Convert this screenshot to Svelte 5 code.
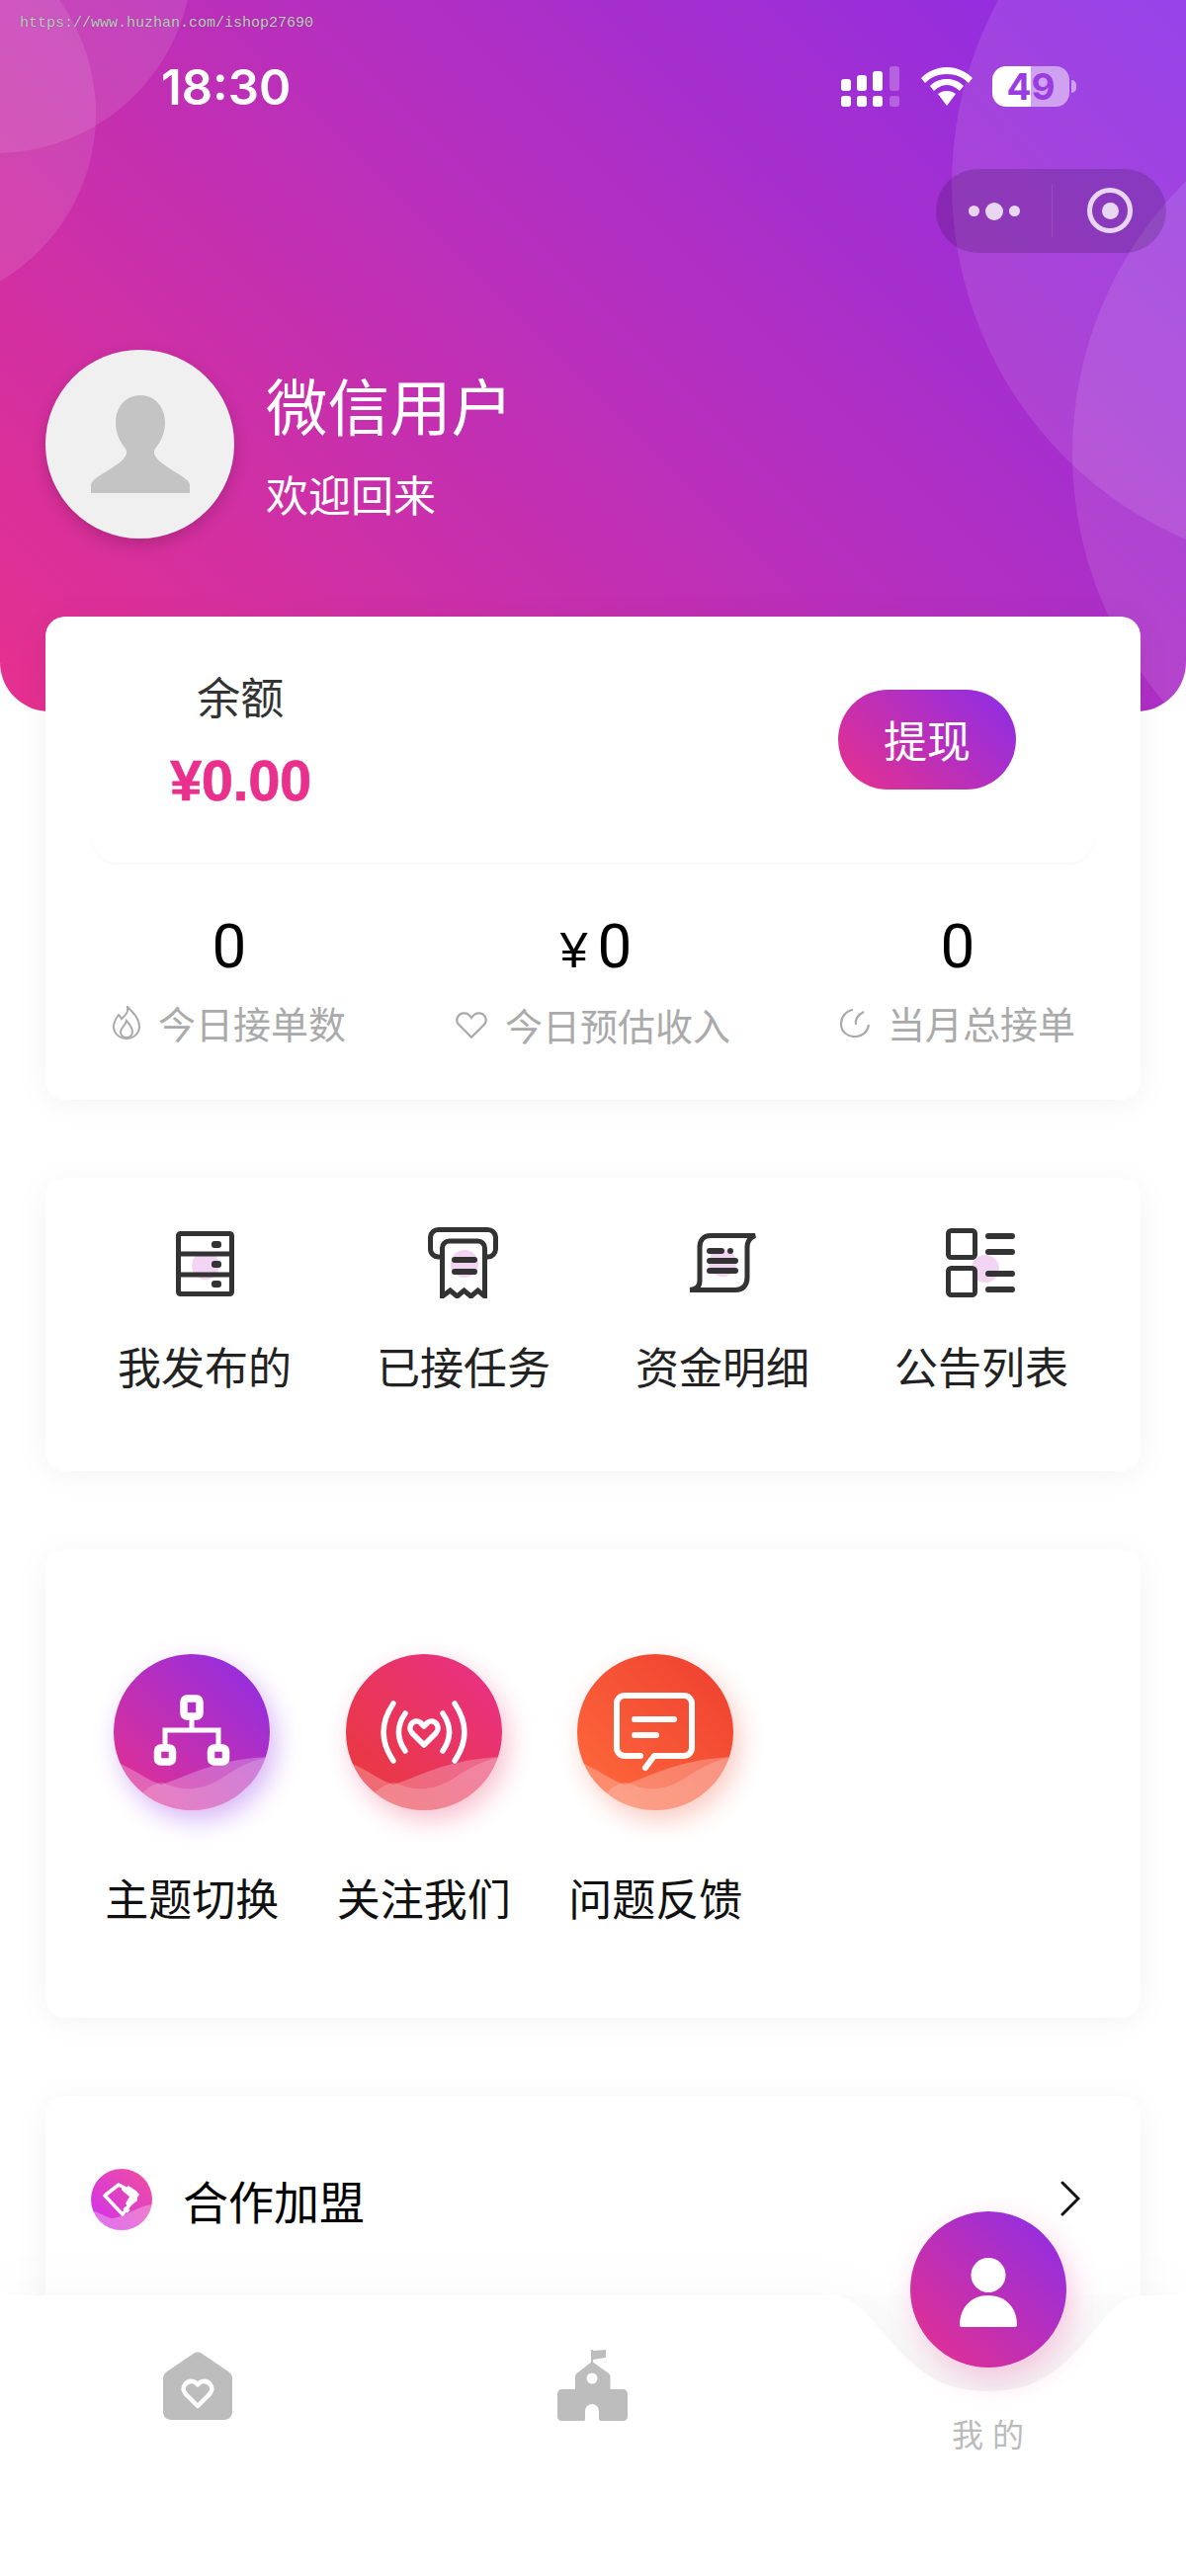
<script>
  const menuItems = [
    { label: '我发布的', icon: 'drawer' },
    { label: '已接任务', icon: 'receipt' },
    { label: '资金明细', icon: 'scroll' },
    { label: '公告列表', icon: 'list' }
  ];

  const tools = [
    { label: '主题切换', tone: 'violet', icon: 'tree' },
    { label: '关注我们', tone: 'rose', icon: 'signal' },
    { label: '问题反馈', tone: 'orange', icon: 'chat' }
  ];
</script>

<div class="page">
  <header class="hero">
    <span class="bubble b1"></span>
    <span class="bubble b2"></span>
    <span class="bubble b3"></span>
    <span class="bubble b4"></span>

    <div class="watermark">https://www.huzhan.com/ishop27690</div>

    <div class="status">
      <span class="time">18:30</span>
      <div class="status-icons">
        <svg width="60" height="42" viewBox="0 0 60 42" fill="#fff">
          <rect x="0" y="13" width="10" height="12" rx="3" />
          <rect x="16" y="9" width="10" height="16" rx="3" />
          <rect x="32" y="5" width="10" height="20" rx="3" />
          <rect x="49" y="0" width="10" height="25" rx="3" opacity=".25" />
          <rect x="0" y="30" width="10" height="11" rx="3" />
          <rect x="16" y="30" width="10" height="11" rx="3" />
          <rect x="32" y="30" width="10" height="11" rx="3" />
          <rect x="49" y="30" width="10" height="11" rx="3" opacity=".25" />
        </svg>
        <svg class="wifi" width="52" height="40" viewBox="0 0 52 40" fill="#fff">
          <path d="M26 0C16 0 7 4 0 11l4 5c6-6 13-9 22-9s16 3 22 9l4-5C45 4 36 0 26 0z" />
          <path d="M26 12c-7 0-12 2-17 7l4 5c3-3 8-6 13-6s10 3 13 6l4-5c-5-5-10-7-17-7z" />
          <path d="M26 24c-4 0-6 1-9 3l9 12 9-12c-3-2-5-3-9-3z" />
        </svg>
        <div class="battery"><span>49</span></div>
        <i class="nub"></i>
      </div>
    </div>

    <div class="capsule">
      <div class="dots"><i></i><i class="big"></i><i></i></div>
      <div class="target"><i></i></div>
    </div>

    <div class="profile">
      <div class="avatar">
        <svg width="100" height="100" viewBox="0 0 100 100" fill="#c4c4c4">
          <path d="M50 0c-14 0-25 11-25 28 0 11 5 20 10 26 2 3 1 6-1 9-6 8-20 14-30 22-3 2-4 4-4 7v7h100v-7c0-3-1-5-4-7-10-8-24-14-30-22-2-3-3-6-1-9 5-6 10-15 10-26C75 11 64 0 50 0z" />
        </svg>
      </div>
      <div class="who">
        <div class="name">微信用户</div>
        <div class="hello">欢迎回来</div>
      </div>
    </div>
  </header>

  <main class="content">
    <section class="card balance-card">
      <div class="balance">
        <div class="balance-text">
          <div class="balance-label">余额</div>
          <div class="balance-value">¥0.00</div>
        </div>
        <div class="withdraw">提现</div>
      </div>
      <div class="stats">
        <div class="stat">
          <div class="stat-num">0</div>
          <div class="stat-label">
            <svg width="28" height="34" viewBox="0 0 28 34" fill="none" stroke="#aaa" stroke-width="2">
              <path d="M15 1c1 6-2 8-6 12-1-2-2-3-3-4-3 4-5 8-5 12 0 7 6 12 13 12s13-5 13-12c0-8-6-14-12-20z" />
              <path d="M14 32c-4 0-6-3-6-6 0-4 5-6 6-11 3 4 6 7 6 11 0 3-2 6-6 6z" />
            </svg>
            今日接单数
          </div>
        </div>
        <div class="stat">
          <div class="stat-num"><small>¥</small>0</div>
          <div class="stat-label low">
            <svg width="32" height="29" viewBox="0 0 34 30" fill="none" stroke="#aaa" stroke-width="2.4">
              <path d="M17 28 3 14C-1 9 3 2 9 2c3 0 6 2 8 5 2-3 5-5 8-5 6 0 10 7 6 12z" />
            </svg>
            今日预估收入
          </div>
        </div>
        <div class="stat">
          <div class="stat-num">0</div>
          <div class="stat-label">
            <svg width="30" height="30" viewBox="0 0 30 30" fill="none" stroke="#aaa" stroke-width="2.2">
              <path d="M13 2C6 3 1 9 1 16c0 8 6 13 14 13s13-5 14-12" />
              <path d="M16 17c-1-5 2-10 8-13" />
            </svg>
            当月总接单
          </div>
        </div>
      </div>
    </section>

    <section class="card menu-card">
      {#each menuItems as item}
        <div class="menu-item">
          <div class="menu-icon">
            <span class="blot {item.icon}"></span>
            {#if item.icon === 'drawer'}
              <svg width="72" height="72" viewBox="0 0 72 72" fill="none" stroke="#333" stroke-width="5">
                <rect x="9.500" y="6.500" width="54" height="61" rx="2" />
                <path d="M8 27h57M8 48h57" />
                <g fill="#333" stroke="none">
                  <rect x="43" y="14" width="10" height="7" rx="3" />
                  <rect x="43" y="34" width="10" height="7" rx="3" />
                  <rect x="43" y="54" width="10" height="7" rx="3" />
                </g>
              </svg>
            {:else if item.icon === 'receipt'}
              <svg width="72" height="72" viewBox="0 0 72 72" fill="none" stroke="#333" stroke-width="5">
                <path d="M12 30H11a8 8 0 0 1-8.500-8V10a8 8 0 0 1 8-7.500h50a8 8 0 0 1 8 7.500v12a8 8 0 0 1-8 8H60" />
                <path d="M14.500 70V21a7 7 0 0 1 7-7h29a7 7 0 0 1 7 7v49l-7-6-7 6-7-6-7 6-7-6-8 6z" stroke-linejoin="miter" />
                <path d="M27 33h20M27 45h20" stroke-linecap="round" stroke-width="6" />
              </svg>
            {:else if item.icon === 'scroll'}
              <svg width="72" height="72" viewBox="0 0 72 72" fill="none" stroke="#333" stroke-width="5" stroke-linecap="round">
                <path d="M69 8.500H24C16 8.500 13 14 13 20V54c0 6-3 9-10 9.500H49c8 0 12-5 12-13V20C61 15 63 11 69 8.500z" />
                <path d="M23 24h12M23 34h26M23 44h26" stroke-width="6" />
                <circle cx="44" cy="24" r="3" fill="#333" stroke="none" />
              </svg>
            {:else}
              <svg width="72" height="72" viewBox="0 0 72 72" fill="none" stroke="#333" stroke-width="5">
                <rect x="2.500" y="3.500" width="27" height="27" rx="3" />
                <rect x="2.500" y="41.500" width="27" height="27" rx="3" />
                <path d="M43 9h24M43 25h24M43 47h24M43 63h24" stroke-width="6" stroke-linecap="round" />
              </svg>
            {/if}
          </div>
          <div class="menu-label">{item.label}</div>
        </div>
      {/each}
    </section>

    <section class="card tools-card">
      {#each tools as tool}
        <div class="tool">
          <div class="tool-icon {tool.tone}">
            {#if tool.icon === 'tree'}
              <svg width="80" height="80" viewBox="0 0 80 80" fill="none" stroke="#fff" stroke-width="7.500">
                <rect x="32" y="6" width="16" height="18" rx="3" />
                <path d="M40 27v11H13v15M40 38h27v15" stroke-width="5" />
                <rect x="5.500" y="56" width="15" height="14" rx="3" />
                <rect x="59.500" y="56" width="15" height="14" rx="3" />
              </svg>
            {:else if tool.icon === 'signal'}
              <svg width="90" height="80" viewBox="0 0 90 80" fill="none" stroke="#fff" stroke-width="5.500" stroke-linecap="round">
                <path d="M14 11C1 30 1 50 14 69M76 11c13 19 13 39 0 58" />
                <path d="M26 21c-9 13-9 25 0 38M64 21c9 13 9 25 0 38" />
                <path d="M45 53 33 41c-6-7 2-15 8-11l4 4 4-4c6-4 14 4 8 11z" stroke-linejoin="round" />
              </svg>
            {:else}
              <svg width="84" height="84" viewBox="0 0 84 84" fill="none" stroke="#fff" stroke-width="6" stroke-linecap="round">
                <path d="M27 66H11a8 8 0 0 1-8-8V13a8 8 0 0 1 8-8h60a8 8 0 0 1 8 8v45a8 8 0 0 1-8 8H41l-9 12" stroke-linejoin="round" />
                <path d="M21 29h40M21 45h22" />
              </svg>
            {/if}
            <svg class="waves" width="158" height="158" viewBox="0 0 158 158">
              <path d="M0 108c20 8 35 20 48 24 22-6 52-26 110-28v54H0z" fill="rgba(255,255,255,.26)" />
              <path d="M20 158V150c10-12 20-20 30-20 20 10 40 8 60-5 15-10 30-18 48-21v54z" fill="rgba(255,255,255,.18)" />
            </svg>
          </div>
          <div class="tool-label">{tool.label}</div>
        </div>
      {/each}
    </section>

    <section class="card join-card">
      <div class="join-row">
        <div class="join-icon">
          <svg class="join-wave" width="62" height="62" viewBox="0 0 62 62">
            <path d="M0 42c10 2 16 8 22 8 14-2 24-12 40-14v26H0z" fill="rgba(255,255,255,.3)" />
            <path d="M14 27 28 16 47 26 32 46z" fill="none" stroke="#fff" stroke-width="3.500" stroke-linejoin="round" />
            <path d="M31 17l5 2 2-2 9 6v9l-9 7-3-4 4-7-5-4-3-3z" fill="#fff" />
            <path d="M33 41l4-3M36 44l3-3" stroke="#fff" stroke-width="2" />
          </svg>
        </div>
        <div class="join-label">合作加盟</div>
        <svg class="chevron" width="20" height="36" viewBox="0 0 20 36" fill="none" stroke="#111" stroke-width="3" stroke-linecap="round">
          <path d="M2 2l16 16L2 34" />
        </svg>
      </div>
    </section>
  </main>

  <nav class="tabbar">
    <svg class="tab-bg" width="1200" height="284" viewBox="0 0 1200 284">
      <defs>
        <linearGradient id="notch" x1="0" y1="0" x2="0" y2="1">
          <stop offset="0" stop-color="#fdfdfd" />
          <stop offset="1" stop-color="#f7f7f7" />
        </linearGradient>
      </defs>
      <path d="M846 0c26 4 44 38 74 66 24 22 46 31 80 31s56-9 80-31c28-26 44-62 74-66z" fill="url(#notch)" />
      <path class="tab-white" d="M0 0H846c26 4 44 38 74 66 24 22 46 31 80 31s56-9 80-31c28-26 44-62 74-66h46v284H0z" fill="#fff" />
    </svg>
    <div class="tab">
      <svg width="70" height="70" viewBox="0 0 70 70">
        <path d="M35 .500c-1.500 0-3 .5-4 1.200L4 20c-2.500 1.700-4 4-4 7v34c0 4.400 3.600 8 8 8h54c4.400 0 8-3.600 8-8V27c0-3-1.500-5.300-4-7L39 1.700C38 1 36.500.5 35 .500z" fill="#bdbdbd" />
        <path d="M35 55 23 43c-6-7 1-14 7-13 2 .3 3.500 1.500 5 3.500 1.500-2 3-3.200 5-3.500 6-1 13 6 7 13z" fill="none" stroke="#fff" stroke-width="4.500" stroke-linejoin="round" />
      </svg>
    </div>
    <div class="tab castle">
      <svg width="72" height="72" viewBox="0 0 72 72" fill="#bdbdbd">
        <rect x="34" y="0" width="2" height="13" />
        <path d="M36 1 49 0v8l-13 2z" />
        <path d="M35 12l17 12c1 1 1.500 2 1.500 3v13H66c3 0 5 2 5 5v23c0 2-2 4-4 4H44c-1.500 0-2-1-2-2v-8a7 7 0 0 0-14 0v8c0 1-.5 2-2 2H4c-2 0-4-2-4-4V45c0-3 2-5 5-5h13V27c0-1 .5-2 1.500-3z" />
        <circle cx="35" cy="29" r="5.500" fill="#fff" />
      </svg>
    </div>
    <div class="tab active">
      <div class="me-label">我 的</div>
    </div>
    <div class="fab">
      <svg width="60" height="70" viewBox="0 0 60 70" fill="#fff">
        <circle cx="30" cy="17.500" r="17.500" />
        <path d="M1 68c0-17 11-30 29-30s29 13 29 30c0 1-1 2-2 2H3c-1 0-2-1-2-2z" />
      </svg>
    </div>
  </nav>
</div>

<style>
  :global(body) {
    margin: 0;
    background: #fff;
  }

  .page {
    position: relative;
    width: 1200px;
    height: 2607px;
    overflow: hidden;
    background: #fff;
    font-family: "Noto Sans CJK SC", "Noto Sans", sans-serif;
  }

  .hero {
    position: relative;
    height: 720px;
    box-sizing: border-box;
    overflow: hidden;
    border-radius: 0 0 50px 50px;
    background: linear-gradient(45deg, #e6308e, #8b2ee8);
  }

  .bubble {
    position: absolute;
    border-radius: 50%;
    background: rgba(255, 255, 255, 0.1);
  }
  .b1 { left: -205px; top: -245px; width: 400px; height: 400px; }
  .b2 { left: -297px; top: -82px; width: 394px; height: 394px; }
  .b3 { left: 963px; top: -206px; width: 784px; height: 784px; }
  .b4 { left: 1085px; top: 71px; width: 776px; height: 776px; }

  .watermark {
    position: absolute;
    left: 20px;
    top: 15px;
    font: 15px/18px "Liberation Mono", monospace;
    color: #c9c9c9;
    text-shadow: 0 0 1px rgba(60, 60, 60, 0.7);
  }

  .status {
    position: relative;
    display: flex;
    justify-content: space-between;
    padding: 60px 111px 0 163px;
    height: 50px;
  }

  .time {
    font: 600 49px/58px Inter, sans-serif;
    color: #fff;
  }

  .status-icons {
    display: flex;
    align-items: flex-start;
    padding-top: 7px;
  }

  .wifi {
    margin-left: 21px;
    margin-top: 1px;
  }

  .battery {
    position: relative;
    width: 78px;
    height: 41px;
    margin-left: 20px;
    border-radius: 14px;
    background: linear-gradient(90deg, #fff 50%, rgba(255, 255, 255, 0.5) 50%);
    text-align: center;
    font: 700 37px/41px Inter, sans-serif;
    color: #9a3ce0;
  }

  .nub {
    width: 5px;
    height: 13px;
    margin: 14px 0 0 2px;
    border-radius: 0 6px 6px 0;
    background: rgba(255, 255, 255, 0.5);
  }

  .capsule {
    position: absolute;
    left: 947px;
    top: 171px;
    display: flex;
    width: 233px;
    height: 85px;
    border-radius: 43px;
    background: rgba(0, 0, 0, 0.15);
  }

  .dots {
    display: flex;
    align-items: center;
    justify-content: center;
    gap: 6px;
    width: 117px;
    margin: 16px 0;
    border-right: 1px solid rgba(255, 255, 255, 0.1);
  }
  .dots i {
    width: 11px;
    height: 11px;
    border-radius: 50%;
    background: rgba(255, 255, 255, 0.8);
  }
  .dots i.big {
    width: 18px;
    height: 18px;
  }

  .target {
    display: flex;
    align-items: center;
    justify-content: center;
    width: 46px;
    height: 46px;
    box-sizing: border-box;
    margin: 19px 0 0 35px;
    border: 5px solid rgba(255, 255, 255, 0.8);
    border-radius: 50%;
  }
  .target i {
    width: 17px;
    height: 17px;
    border-radius: 50%;
    background: rgba(255, 255, 255, 0.8);
  }

  .profile {
    position: absolute;
    left: 46px;
    top: 354px;
    display: flex;
    align-items: center;
    gap: 32px;
  }

  .avatar {
    display: flex;
    align-items: center;
    justify-content: center;
    width: 191px;
    height: 191px;
    border-radius: 50%;
    background: #f0f0f0;
    box-shadow: 0 6px 16px rgba(0, 0, 0, 0.18);
  }

  .who {
    margin-top: -4px;
  }

  .name {
    font-size: 62.500px;
    line-height: 84px;
    color: #fff;
  }

  .hello {
    margin-top: 18px;
    font-size: 43px;
    line-height: 60px;
    color: #fff;
  }

  .content {
    position: relative;
    display: flex;
    flex-direction: column;
    gap: 79px;
    margin-top: -96px;
    padding: 0 46px;
  }

  .card {
    border-radius: 20px;
    background: #fff;
    box-shadow: 0 4px 36px rgba(0, 0, 0, 0.05);
  }

  .balance-card {
    height: 489px;
    box-sizing: border-box;
    padding: 46px 48px 0;
  }

  .balance {
    display: flex;
    align-items: center;
    justify-content: space-between;
    height: 203px;
    box-sizing: border-box;
    padding: 0 78px 46px 78px;
    border-radius: 24px;
    box-shadow: 0 2px 3px rgba(0, 0, 0, 0.03);
  }

  .balance-text {
    text-align: center;
  }

  .balance-label {
    font-size: 44px;
    line-height: 60px;
    color: #333;
  }

  .balance-value {
    margin-top: 22px;
    font: 700 58px/68px "Liberation Sans", sans-serif;
    letter-spacing: -0.5px;
    -webkit-text-stroke: 0.6px #e8308c;
    color: #e8308c;
  }

  .withdraw {
    width: 180px;
    height: 101px;
    border-radius: 51px;
    background: linear-gradient(45deg, #e8308c, #8b2ee8);
    text-align: center;
    font-size: 44px;
    line-height: 101px;
    color: #fff;
  }

  .stats {
    display: grid;
    grid-template-columns: 276px 460px 278px;
    margin-top: 49px;
  }

  .stat {
    text-align: center;
  }

  .stat-num {
    height: 72px;
    font: 400 62px/72px Roboto, sans-serif;
    color: #000;
  }
  .stat-num small {
    margin-left: 6px;
    margin-right: 10px;
    font: 50px/1 "Liberation Sans", sans-serif;
  }

  .stat-label {
    display: flex;
    align-items: center;
    justify-content: center;
    gap: 18px;
    margin-top: 11px;
    font-size: 38px;
    line-height: 60px;
    color: #aaa;
  }
  .stat-label.low {
    margin-top: 13px;
  }

  .menu-card {
    display: grid;
    grid-template-columns: repeat(4, 262px);
    height: 297px;
    box-sizing: border-box;
    padding: 50px 30px 0;
  }

  .menu-item {
    display: flex;
    flex-direction: column;
    align-items: center;
  }

  .menu-icon {
    position: relative;
    width: 72px;
    height: 72px;
  }

  .blot {
    position: absolute;
    width: 28px;
    height: 28px;
    border-radius: 50%;
    background: #f1d5f3;
  }
  .blot.drawer { left: 23px; top: 25px; }
  .blot.receipt { left: 23px; top: 23px; }
  .blot.scroll { left: 22px; top: 22px; }
  .blot.list { left: 26px; top: 28px; }

  .menu-icon svg {
    position: relative;
    display: block;
  }

  .menu-label {
    margin-top: 38px;
    font-size: 44px;
    line-height: 60px;
    color: #222;
  }

  .tools-card {
    display: flex;
    height: 474px;
    box-sizing: border-box;
    padding: 106px 30px 0 31px;
  }

  .tool {
    display: flex;
    flex-direction: column;
    align-items: center;
    width: 234.5px;
  }

  .tool-icon {
    position: relative;
    display: flex;
    align-items: center;
    justify-content: center;
    width: 158px;
    height: 158px;
    border-radius: 50%;
  }
  .tool-icon svg {
    position: relative;
  }
  .tool-icon .waves {
    position: absolute;
    left: 0;
    top: 0;
    border-radius: 50%;
  }
  .tool-icon.violet {
    background: linear-gradient(45deg, #e8308c, #8b2ee8);
    box-shadow: 6px 10px 26px rgba(139, 46, 232, 0.35);
  }
  .tool-icon.rose {
    background: linear-gradient(45deg, #ea3a34, #e8308c);
    box-shadow: 6px 10px 26px rgba(232, 48, 100, 0.3);
  }
  .tool-icon.orange {
    background: linear-gradient(45deg, #ff6c3c, #ee3e30);
    box-shadow: 6px 10px 26px rgba(240, 80, 50, 0.3);
  }

  .tool-label {
    margin-top: 58px;
    font-size: 44px;
    line-height: 60px;
    color: #111;
  }

  .join-card {
    height: 400px;
    box-sizing: border-box;
    padding: 74px 46px 0;
  }

  .join-row {
    display: flex;
    align-items: center;
    height: 62px;
  }

  .join-icon {
    position: relative;
    width: 62px;
    height: 62px;
    overflow: hidden;
    border-radius: 50%;
    background: linear-gradient(45deg, #d030f0, #f0509c);
  }
  .join-wave {
    display: block;
  }

  .join-label {
    margin-left: 31px;
    font-size: 46px;
    line-height: 62px;
    color: #000;
  }

  .chevron {
    margin-left: auto;
    margin-right: 15px;
    margin-top: -2px;
  }

  .tabbar {
    position: absolute;
    left: 0;
    bottom: 0;
    display: flex;
    width: 1200px;
    height: 284px;
  }

  .tab-bg {
    position: absolute;
    left: 0;
    top: 0;
    overflow: visible;
  }
  .tab-white {
    filter: drop-shadow(0 -6px 30px rgba(0, 0, 0, 0.02));
  }

  .tab {
    position: relative;
    display: flex;
    justify-content: center;
    align-items: flex-start;
    padding-top: 57px;
    width: 400px;
  }
  .tab.castle {
    padding-top: 55px;
  }

  .me-label {
    margin-top: 60px;
    font-size: 32px;
    line-height: 44px;
    letter-spacing: 1px;
    color: #bbb;
  }

  .fab {
    position: absolute;
    left: 921px;
    top: -85px;
    display: flex;
    align-items: center;
    justify-content: center;
    width: 158px;
    height: 158px;
    border-radius: 50%;
    background: linear-gradient(45deg, #e8308c, #8b2ee8);
    box-shadow: 6px 12px 30px rgba(232, 48, 140, 0.25);
  }
  .fab svg {
    margin-top: 5px;
  }
</style>
